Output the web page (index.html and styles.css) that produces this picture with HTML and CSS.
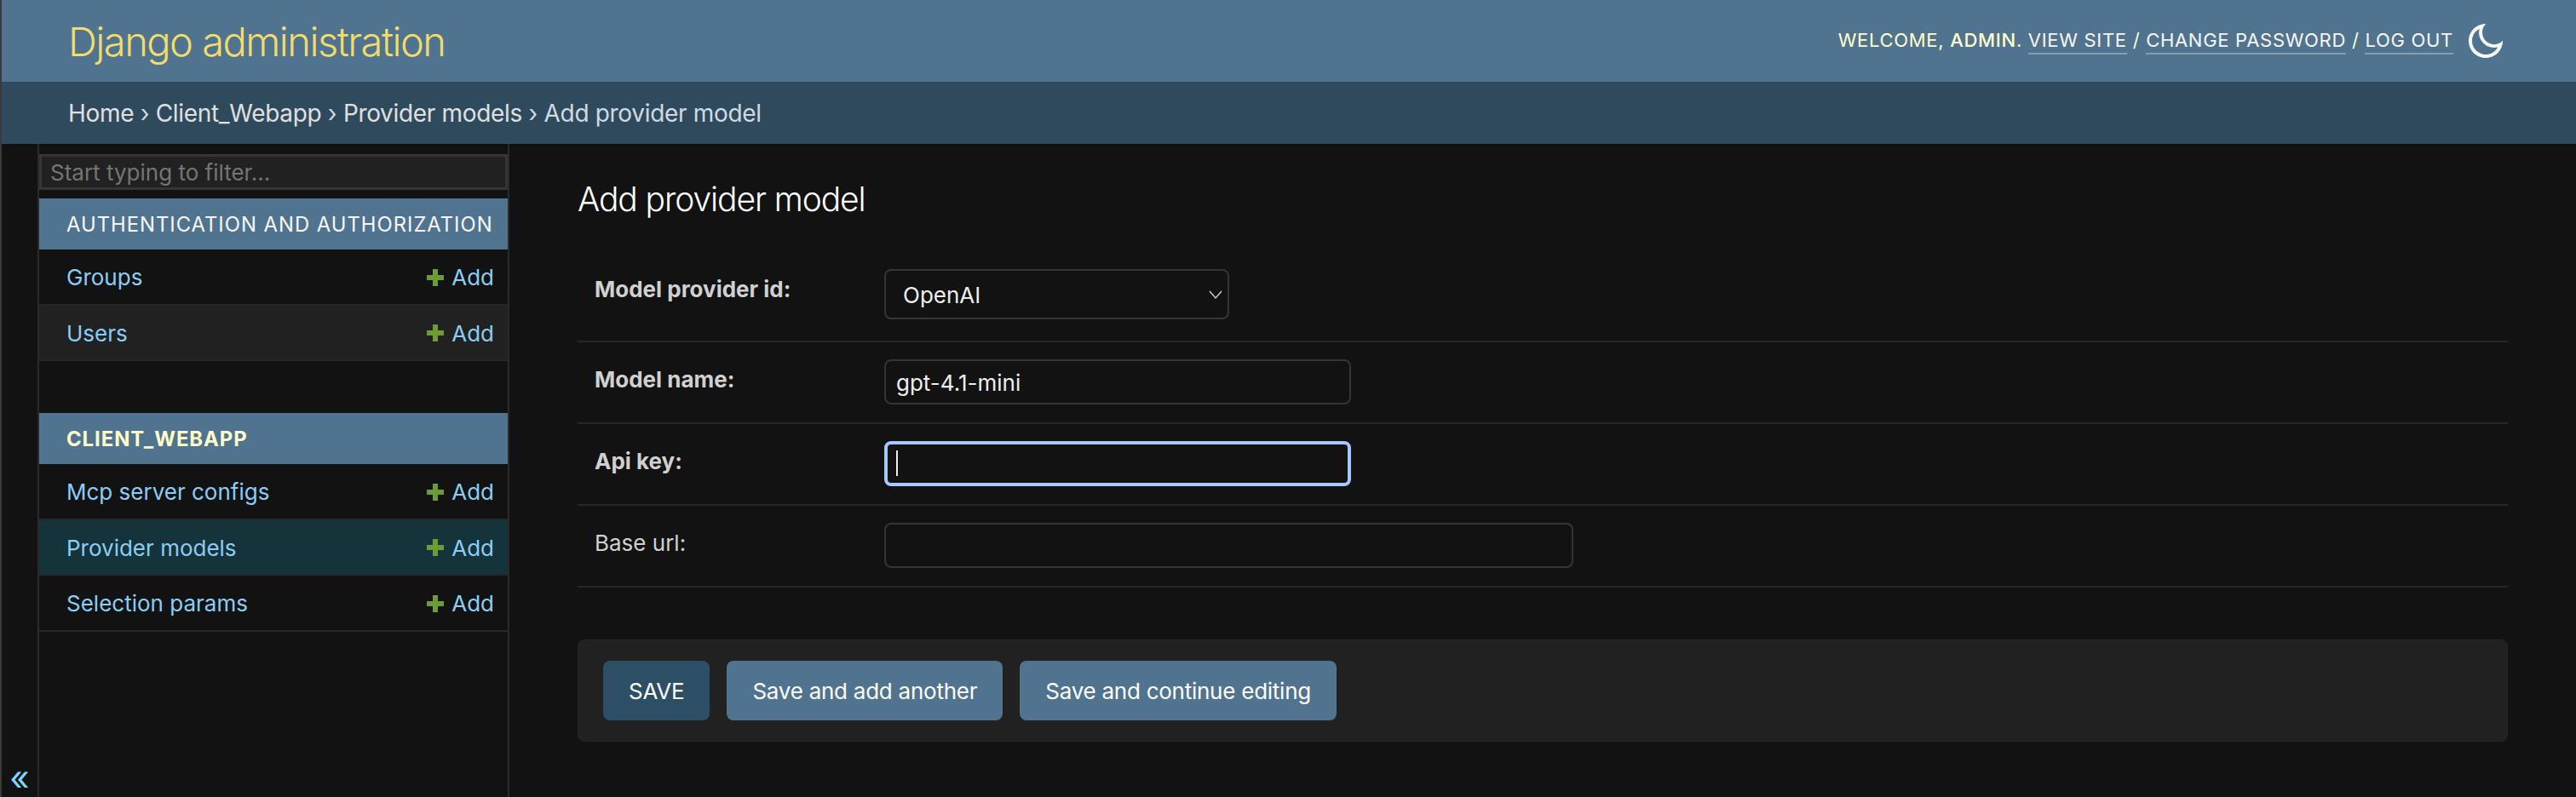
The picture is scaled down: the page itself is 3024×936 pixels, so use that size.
FILE: index.html
```html
<!DOCTYPE html>
<html lang="en">
<head>
    <meta charset="UTF-8">
    <title>Add provider model | Django site admin</title>
    <link rel="stylesheet" href="styles.css">
</head>
<body>
    <header class="header">
        <h1 class="site-name">Django administration</h1>
        <div class="user-bar">
            <div class="user-tools">
                Welcome, <strong>admin</strong>.
                <a href="#">View site</a> /
                <a href="#">Change password</a> /
                <a href="#">Log out</a>
            </div>
            <svg class="theme-icon" viewBox="0 0 24 24" fill="currentColor">
                <path d="M10 7a7 7 0 0 0 12 4.9v.1c0 5.523-4.477 10-10 10S2 17.523 2 12 6.477 2 12 2h.1A6.979 6.979 0 0 0 10 7zm-6 5a8 8 0 0 0 15.062 3.762A9 9 0 0 1 8.238 4.938 7.999 7.999 0 0 0 4 12z"/>
            </svg>
        </div>
    </header>

    <nav class="breadcrumbs">
        <a href="#">Home</a> › <a href="#">Client_Webapp</a> › <a href="#">Provider models</a> › Add provider model
    </nav>

    <div class="main">
        <button class="toggle-nav">«</button>

        <aside class="sidebar">
            <input class="nav-filter" type="text" placeholder="Start typing to filter...">

            <section class="app-module">
                <h2 class="app-caption">Authentication and Authorization</h2>
                <div class="model-row"><a href="#">Groups</a><a class="add-link" href="#"><svg class="plus" viewBox="0 0 20 20"><path d="M7 0h6v7h7v6h-7v7H7v-7H0V7h7z"/></svg>Add</a></div>
                <div class="model-row alt"><a href="#">Users</a><a class="add-link" href="#"><svg class="plus" viewBox="0 0 20 20"><path d="M7 0h6v7h7v6h-7v7H7v-7H0V7h7z"/></svg>Add</a></div>
            </section>

            <section class="app-module">
                <h2 class="app-caption current">Client_Webapp</h2>
                <div class="model-row"><a href="#">Mcp server configs</a><a class="add-link" href="#"><svg class="plus" viewBox="0 0 20 20"><path d="M7 0h6v7h7v6h-7v7H7v-7H0V7h7z"/></svg>Add</a></div>
                <div class="model-row selected"><a href="#">Provider models</a><a class="add-link" href="#"><svg class="plus" viewBox="0 0 20 20"><path d="M7 0h6v7h7v6h-7v7H7v-7H0V7h7z"/></svg>Add</a></div>
                <div class="model-row"><a href="#">Selection params</a><a class="add-link" href="#"><svg class="plus" viewBox="0 0 20 20"><path d="M7 0h6v7h7v6h-7v7H7v-7H0V7h7z"/></svg>Add</a></div>
            </section>
        </aside>

        <main class="content">
            <h1 class="page-title">Add provider model</h1>

            <form>
                <div class="form-row first">
                    <label class="required">Model provider id:</label>
                    <div class="select-wrap">
                        <select class="field-select"><option>OpenAI</option></select>
                        <svg class="chevron" viewBox="0 0 16 10" fill="none" stroke="currentColor" stroke-width="1.4"><path d="M1 1l7 8 7-8"/></svg>
                    </div>
                </div>
                <div class="form-row">
                    <label class="required">Model name:</label>
                    <input class="field" type="text" value="gpt-4.1-mini">
                </div>
                <div class="form-row">
                    <label class="required">Api key:</label>
                    <div class="focus-wrap">
                        <input class="field focused" type="text">
                        <span class="caret"></span>
                    </div>
                </div>
                <div class="form-row">
                    <label>Base url:</label>
                    <input class="field wide" type="text">
                </div>

                <div class="submit-row">
                    <button class="btn default" type="button">SAVE</button>
                    <button class="btn" type="button">Save and add another</button>
                    <button class="btn" type="button">Save and continue editing</button>
                </div>
            </form>
        </main>
    </div>
</body>
</html>
```

FILE: styles.css
```css
* {
    box-sizing: border-box;
}

html, body {
    height: 100%;
}

body {
    margin: 0;
    display: flex;
    flex-direction: column;
    height: 936px;
    overflow: hidden;
    background: #121212;
    color: #eeeeee;
    font-family: Inter, "Liberation Sans", sans-serif;
    font-size: 28px;
    border-left: 2px solid #3a3a3a;
}

a {
    color: inherit;
    text-decoration: none;
}

.header {
    height: 96px;
    flex: none;
    display: flex;
    justify-content: space-between;
    align-items: center;
    padding: 0 82px 0 78px;
    background: #50748f;
}

.site-name {
    margin: 0;
    font-size: 47px;
    font-weight: 300;
    letter-spacing: -1.5px;
    color: #f3dc6b;
}

.user-bar {
    display: flex;
    align-items: center;
}

.user-tools {
    margin-top: -3px;
    font-size: 22px;
    letter-spacing: 0.7px;
    text-transform: uppercase;
    color: #ffffcc;
}

.user-tools strong {
    font-weight: 500;
}

.user-tools a {
    color: #f7f7f7;
    border-bottom: 2px solid rgba(255, 255, 255, 0.3);
    padding-bottom: 2px;
}

.theme-icon {
    width: 48px;
    height: 48px;
    margin-left: 14px;
    color: #f7f7f7;
}

.breadcrumbs {
    height: 73px;
    flex: none;
    padding: 2px 0 0 78px;
    background: #2f4a5d;
    color: #d0dae2;
    line-height: 71px;
    letter-spacing: -0.32px;
}

.breadcrumbs a {
    color: #e0e0e0;
}

.main {
    flex: 1;
    display: flex;
    min-height: 0;
}

.toggle-nav {
    width: 42px;
    flex: none;
    display: flex;
    align-items: flex-end;
    justify-content: center;
    padding: 0 0 2px;
    background: none;
    border: none;
    color: #81d4fa;
    font-family: inherit;
    font-size: 40px;
    line-height: 40px;
}

.sidebar {
    width: 554px;
    flex: none;
    padding-top: 12px;
    border-left: 2px solid #2a2a2a;
    border-right: 2px solid #2a2a2a;
}

.nav-filter {
    display: block;
    width: 100%;
    height: 42px;
    padding: 0 10px;
    margin-bottom: 10px;
    background: #212121;
    border: 3px solid #353535;
    color: #eeeeee;
    font-family: inherit;
    font-size: 26px;
}

.nav-filter::placeholder {
    color: #757575;
}

.app-module {
    margin-bottom: 61px;
}

.app-caption {
    margin: 0;
    height: 60px;
    display: flex;
    align-items: center;
    padding-left: 32px;
    background: #50748f;
    color: #f7f7f7;
    font-size: 23.8px;
    font-weight: 400;
    letter-spacing: 1px;
    text-transform: uppercase;
}

.app-caption.current {
    color: #ffffcc;
    font-weight: 700;
}

.model-row {
    height: 65.5px;
    display: flex;
    justify-content: space-between;
    align-items: center;
    padding: 2px 16px 0 32px;
    border-bottom: 2px solid #272727;
    color: #8ccdf5;
    font-size: 26px;
}

.model-row.alt {
    background: #212121;
}

.model-row.selected {
    background: #15333a;
}

.add-link {
    display: flex;
    align-items: center;
    gap: 9px;
}

.plus {
    width: 20px;
    height: 20px;
    fill: #6c9c35;
}

.content {
    flex: 1;
    min-width: 0;
    padding: 41px 80px 0;
}

.page-title {
    margin: 0 0 38px;
    font-size: 39px;
    line-height: 48px;
    font-weight: 300;
    letter-spacing: -1.1px;
    color: #ffffff;
}

.form-row {
    display: flex;
    align-items: flex-start;
    padding: 20px 20px 21px;
    border-bottom: 2px solid #272727;
}

.form-row.first {
    padding-bottom: 25px;
}

.form-row label {
    width: 340px;
    flex: none;
    padding-top: 8px;
    color: #d0d0d0;
    font-size: 26px;
    line-height: 32px;
}

.form-row label.required {
    font-weight: 700;
}

.select-wrap, .focus-wrap {
    position: relative;
}

.field-select {
    display: block;
    width: 405px;
    height: 59px;
    padding: 2px 20px 0;
    appearance: none;
    background: #121212;
    border: 2px solid #353535;
    border-radius: 8px;
    color: #eeeeee;
    font-family: inherit;
    font-size: 26px;
}

.chevron {
    position: absolute;
    right: 8px;
    top: 25px;
    width: 16px;
    height: 10px;
    color: #d0d0d0;
}

.field {
    display: block;
    width: 548px;
    height: 53px;
    padding: 2px 12px 0;
    background: #121212;
    border: 2px solid #353535;
    border-radius: 8px;
    color: #eeeeee;
    font-family: inherit;
    font-size: 26px;
}

.field.wide {
    width: 809px;
}

.field.focused {
    border: 4px solid #a6c8ff;
}

.caret {
    position: absolute;
    left: 14px;
    top: 11px;
    width: 2px;
    height: 30px;
    background: #eeeeee;
}

.submit-row {
    display: flex;
    gap: 20px;
    margin-top: 61px;
    padding: 24px 26px 24px 29px;
    background: #212121;
    border: 1px solid #272727;
    border-radius: 8px;
}

.btn {
    height: 70px;
    padding: 0 30px;
    background: #50748f;
    border: none;
    border-radius: 8px;
    color: #ffffff;
    font-family: inherit;
    font-size: 26px;
    letter-spacing: -0.25px;
}

.btn.default {
    background: #2d4f65;
}
```
